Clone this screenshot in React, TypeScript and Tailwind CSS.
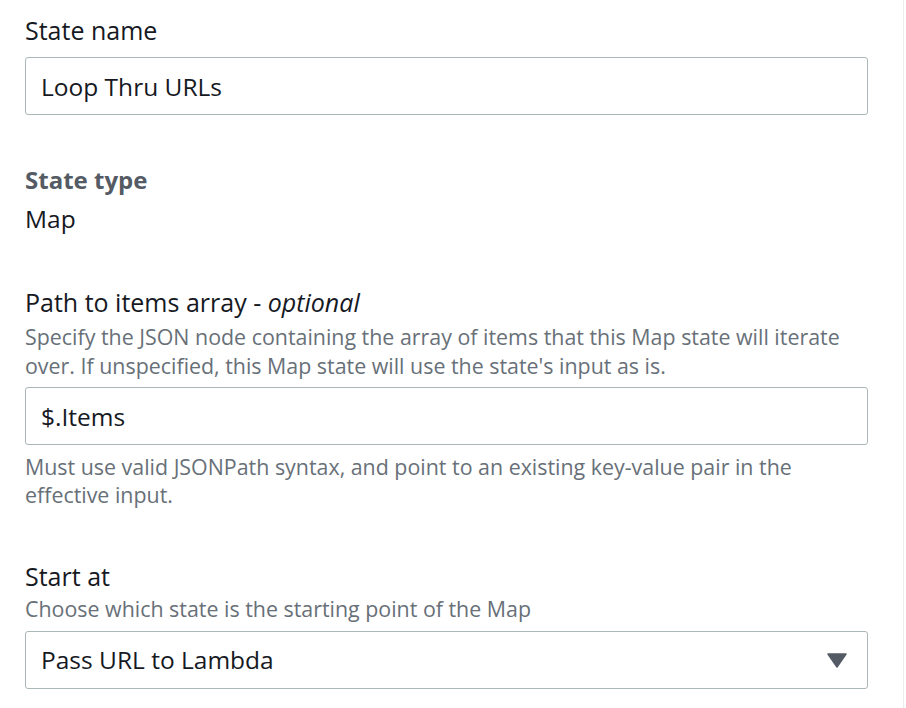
import { useState } from 'react'

const font = { fontFamily: '"Open Sans", "Liberation Sans", sans-serif' }

export default function App() {
  const [name, setName] = useState('Loop Thru URLs')
  const [path, setPath] = useState('$.Items')

  return (
    <div className="w-[906px] h-[708px] bg-white overflow-hidden" style={font}>
      <div className="w-[904px] h-full border-r border-[#eaeded] pl-[25px] pr-[35px] pt-[15px]">
        <div className="text-[25px] leading-[30px] text-[#16191f]">State name</div>
        <input
          value={name}
          onChange={(e) => setName(e.target.value)}
          className="mt-[12px] block w-full h-[58px] px-[15px] border border-[#aab7b8] rounded-[3px] text-[24.5px] text-[#16191f] outline-none"
        />

        <div className="mt-[50px] text-[24px] leading-[30px] font-bold text-[#545b64]">State type</div>
        <div className="mt-[9px] text-[24.5px] leading-[30px] text-[#16191f]">Map</div>

        <div className="mt-[53px] text-[25px] leading-[30px] text-[#16191f]">
          Path to items array - <i>optional</i>
        </div>
        <p className="mt-[5px] text-[21.4px] leading-[29px] text-[#687078]">
          Specify the JSON node containing the array of items that this Map state will iterate over. If unspecified, this Map state will use the state's input as is.
        </p>
        <input
          value={path}
          onChange={(e) => setPath(e.target.value)}
          className="mt-[7px] block w-full h-[58px] px-[15px] border border-[#aab7b8] rounded-[3px] text-[24.5px] text-[#16191f] outline-none"
        />
        <p className="mt-[8px] text-[21.4px] leading-[28px] text-[#687078]">
          Must use valid JSONPath syntax, and point to an existing key-value pair in the effective input.
        </p>

        <div className="mt-[52px] text-[25px] leading-[30px] text-[#16191f]">Start at</div>
        <p className="mt-[4px] text-[21.4px] leading-[28px] text-[#687078]">
          Choose which state is the starting point of the Map
        </p>
        <button className="mt-[8px] flex items-center justify-between w-full h-[58px] pl-[15px] pr-[20px] border border-[#aab7b8] rounded-[3px] text-[24.5px] text-[#16191f] bg-white">
          <span>Pass URL to Lambda</span>
          <svg width="20" height="15" viewBox="0 0 20 15">
            <path d="M1 1 H19 L10 14 Z" fill="#545b64" stroke="#545b64" strokeWidth="1.5" strokeLinejoin="round" />
          </svg>
        </button>
      </div>
    </div>
  )
}
